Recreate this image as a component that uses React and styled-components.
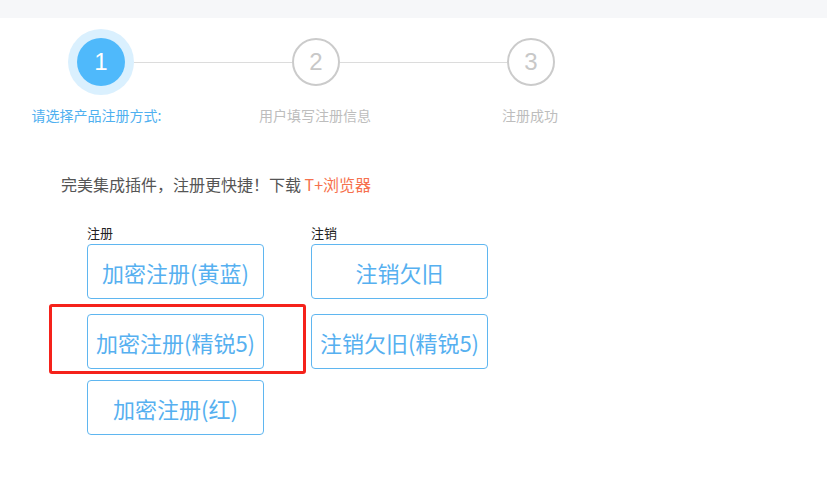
import React from 'react'
import styled, { createGlobalStyle } from 'styled-components'

const GlobalStyle = createGlobalStyle`
  body {
    margin: 0;
    background: #fff;
    font-family: "Noto Sans CJK SC", "Noto Sans", sans-serif;
  }
`

const steps = [
    { num: 1, label: '请选择产品注册方式:' },
    { num: 2, label: '用户填写注册信息' },
    { num: 3, label: '注册成功' },
]

const columns = [
    { title: '注册', items: ['加密注册(黄蓝)', '加密注册(精锐5)', '加密注册(红)'] },
    { title: '注销', items: ['注销欠旧', '注销欠旧(精锐5)'] },
]

const rowGaps = [0, 15, 11]

export default function App() {
    return (
        <>
        <GlobalStyle />
        <Page>
            <TopBar />
            <Track>
                <Halo><Circle active>1</Circle></Halo>
                <Line width={158} />
                <Circle>2</Circle>
                <Line width={167} />
                <Circle>3</Circle>
            </Track>
            <Labels>
                {steps.map(s => (
                    <StepLabel key={s.num} active={s.num === 1}>{s.label}</StepLabel>
                ))}
            </Labels>
            <Intro>
                完美集成插件，注册更快捷！下载 <Link>T+浏览器</Link>
            </Intro>
            <Columns>
                {columns.map(col => (
                    <Column key={col.title}>
                        <ColTitle>{col.title}</ColTitle>
                        {col.items.map((item, i) => (
                            <Button key={item} gap={rowGaps[i]}>{item}</Button>
                        ))}
                    </Column>
                ))}
                <Highlight />
            </Columns>
        </Page>
        </>
    )
}

const Page = styled.div`
    width: 827px;
    height: 485px;
    overflow: hidden;
`

const TopBar = styled.div`
    height: 18px;
    background: #f6f7f9;
`

const Track = styled.div`
    display: flex;
    align-items: center;
    margin-top: 11px;
    padding-left: 68px;
    height: 66px;
`

const Halo = styled.div`
    width: 66px;
    height: 66px;
    border-radius: 50%;
    background: #daf0fe;
    display: flex;
    align-items: center;
    justify-content: center;
`

const Circle = styled.div`
    box-sizing: border-box;
    width: 48px;
    height: 48px;
    border-radius: 50%;
    display: flex;
    align-items: center;
    justify-content: center;
    font-family: "Liberation Sans", Arial, sans-serif;
    font-size: 24px;
    background: ${p => p.active ? '#4fb9fb' : '#fff'};
    color: ${p => p.active ? '#fff' : '#c8c8c8'};
    border: ${p => p.active ? 'none' : '2px solid #cbcbcb'};
`

const Line = styled.div`
    width: ${p => p.width}px;
    height: 1px;
    background: #dcdcdc;
`

const Labels = styled.div`
    display: grid;
    grid-template-columns: 193px 244px 186px;
    margin-top: 10px;
`

const StepLabel = styled.div`
    text-align: center;
    font-size: 14px;
    line-height: 20px;
    color: ${p => p.active ? '#4fb0f0' : '#bdbdbd'};
`

const Intro = styled.div`
    margin-top: 49px;
    padding-left: 61px;
    font-size: 16px;
    line-height: 20px;
    color: #555;
`

const Link = styled.span`
    color: #f6714d;
`

const Columns = styled.div`
    position: relative;
    display: flex;
    gap: 47px;
    margin-top: 31px;
    padding-left: 87px;
`

const Column = styled.div`
    display: flex;
    flex-direction: column;
    width: 177px;
`

const ColTitle = styled.div`
    font-size: 13px;
    line-height: 16px;
    color: #222;
    margin-bottom: 3px;
`

const Button = styled.button`
    box-sizing: border-box;
    margin-top: ${p => p.gap}px;
    width: 177px;
    height: 55px;
    border: 1px solid #5fb6f0;
    border-radius: 4px;
    background: #fff;
    color: #56b0f0;
    font-family: inherit;
    font-size: 22px;
    padding: 0;
    cursor: pointer;
`

const Highlight = styled.div`
    position: absolute;
    left: 49px;
    top: 79px;
    width: 257px;
    height: 70px;
    box-sizing: border-box;
    border: 3px solid #f5221b;
    border-radius: 3px;
    pointer-events: none;
`
